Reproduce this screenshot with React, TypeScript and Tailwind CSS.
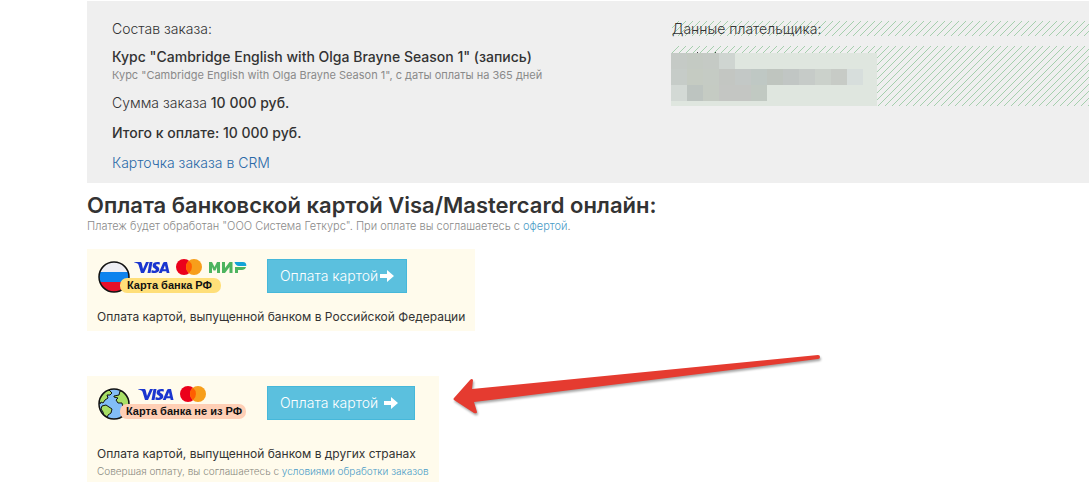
import type { ReactNode } from "react";

const STRIPES =
  "bg-[linear-gradient(135deg,transparent_43%,#a5cfad_46%,#a5cfad_54%,transparent_57%)] bg-[length:7px_7px]";

// 16px cells of the blurred payer data, row by row
const CELLS = [
  ["#c5cac6", "#c4cac3", "#c5cac5", "#cfd5d1"],
  ["#c6ccc8", "#c5cbc2", "#c5cbc4", "#c3c6c2", "#c3c8c6", "#bfc8c4", "#bfc5bf", "#c1c6c4", "#c6cbc8", "#cbd1cb", "#c7cbc6", "#d7dedc"],
  ["#d3d9d5", "#bdc4c0", "#c5cbc3", "#c4c6c3", "#c4c6c3", "#c1c9c2"],
];

function HiddenPayer() {
  return (
    <svg width="206" height="60" viewBox="0 0 206 60" className="-ml-px block" aria-hidden="true">
      <path d="M26 6h1v1h-1zM44 6h1v1h-1z" fill="#444" />
      <rect y="7" width="206" height="53" fill="#dfe6df" />
      {CELLS.map((row, y) =>
        row.map((color, x) => (
          <rect key={`${x}-${y}`} x={x * 16} y={7 + y * 16} width="16" height="16" fill={color} />
        ))
      )}
    </svg>
  );
}

function Visa() {
  return (
    <g fill="#1a35cf">
      <path d="M0 0h6c1 0 1.500.5 1.700 1.300L9 7l3-7h3L10 11H7L4.500 2.700C4 1.500 2 .7 0 .3z" />
      <path d="M15.500 0h3l-2 11h-3z" />
      <path d="M26 .4l-.5 2.300c-2-.8-3.500-.6-3.500.3 0 1.200 3.300 1.500 3.300 4.200 0 3.500-4.500 4.600-8 3.300l.5-2.400c2 1 4 .8 4-.3 0-1.200-3.200-1.500-3.200-4.200C18.600.2 22.700-.6 26 .4z" />
      <path fillRule="evenodd" d="M30.500 0H33l2.500 11h-2.800l-.4-1.700H28.500L27.700 11h-3L29 1c.3-.7.800-1 1.500-1zM31 3.300L29.400 7.200h2.400z" />
    </g>
  );
}

function Mastercard() {
  return (
    <>
      <circle cx="8" cy="8" r="8" fill="#eb001b" />
      <circle cx="18" cy="8" r="8" fill="#f79e1b" />
      <path d="M13 1.800a8 8 0 0 1 0 12.400a8 8 0 0 1 0-12.400z" fill="#ff5f00" />
    </>
  );
}

function RussianCards() {
  return (
    <svg width="150" height="34" viewBox="0 0 150 34" role="img" aria-label="Visa, Mastercard, Мир">
      <clipPath id="flag">
        <circle cx="17" cy="18" r="15" />
      </clipPath>
      <g clipPath="url(#flag)">
        <path d="M0 0h34v14H0z" fill="#eeeef3" />
        <path d="M0 13h34v10H0z" fill="#0d83ee" />
        <path d="M0 23h34v12H0z" fill="#e8102b" />
      </g>
      <circle cx="17" cy="18" r="15" fill="none" stroke="#111" strokeWidth="1.500" />
      <g transform="translate(37 3)"><Visa /></g>
      <g transform="translate(79 0)"><Mastercard /></g>
      <g transform="translate(112 3)">
        <path d="M0 11V0h3l2.500 5L8 0h3v11H8V5L6.500 8.500h-2L3 5v6zM13 11V0h3v6l4.500-6h3v11h-3V5L16 11zM26 5h11c-.6 2.200-2.300 3-4 3h-4v3h-3z" fill="#4db45f" />
        <path d="M25.500 0H34c2.300 0 3.500 1.500 3.300 4H30c-2.500 0-4-1.700-4.500-4z" fill="#13a3d7" />
      </g>
      <rect x="23" y="19" width="101" height="15" rx="7" fill="#ffdf79" />
      <text x="30" y="30" fontSize="11" fontWeight="700" fill="#111" className="font-['Liberation_Sans',sans-serif]">Карта банка РФ</text>
    </svg>
  );
}

function WorldCards() {
  return (
    <svg width="150" height="34" viewBox="0 0 150 34" role="img" aria-label="Visa, Mastercard">
      <clipPath id="globe">
        <circle cx="17" cy="18" r="15" />
      </clipPath>
      <circle cx="17" cy="18" r="15" fill="#82bdf7" />
      <g clipPath="url(#globe)" fill="#a8df66" stroke="#111" strokeWidth="1">
        <path d="M1 13L6 6l6-2 3 3-2 2-3 0 1 3-3 2-2 3-2-1-1 2z" />
        <path d="M5 20l4-1 6 4-1 4-3 2-1 4-3-2-1-5-2-3z" />
        <path d="M17 10l5-1 1-4 5 1 6 7v7l-4-1-1 4-3-1-1-5-4 0-2-3 2-2-4-1z" />
      </g>
      <circle cx="17" cy="18" r="15" fill="none" stroke="#111" strokeWidth="1.500" />
      <g transform="translate(41 3)"><Visa /></g>
      <g transform="translate(83 0)"><Mastercard /></g>
      <rect x="23" y="18" width="126" height="15" rx="7" fill="#ffcfb5" />
      <text x="29" y="29" fontSize="11" fontWeight="700" fill="#111" className="font-['Liberation_Sans',sans-serif]">Карта банка не из РФ</text>
    </svg>
  );
}

interface PayButtonProps {
  spacing: string;
}

function PayButton({ spacing }: PayButtonProps) {
  return (
    <button className={`flex h-[34px] items-center border border-[#46b8da] bg-[#5bc0de] text-sm text-white ${spacing}`}>
      Оплата картой
      <svg width="14" height="12" viewBox="0 0 14 12" aria-hidden="true">
        <path d="M0 4h7V0l7 6-7 6V8H0z" fill="currentColor" />
      </svg>
    </button>
  );
}

interface PayOptionProps {
  cards: ReactNode;
  button: ReactNode;
  children: ReactNode;
}

function PayOption({ cards, button, children }: PayOptionProps) {
  return (
    <section className="w-fit bg-[#fffbec] px-2.5 pt-2.5">
      <div className="flex items-start gap-5">
        {cards}
        {button}
      </div>
      {children}
    </section>
  );
}

export default function App() {
  return (
    <main className="pl-[87px] pt-px font-['Inter','Liberation_Sans',sans-serif] text-sm font-light text-[#333]">
      <section className="flex bg-[#efefef] pb-2.5 pl-[25px] pt-[18px]">
        <div className="w-[560px] shrink-0">
          <p className="leading-5">Состав заказа:</p>
          <p className="mt-2 font-medium leading-5">Курс "Cambridge English with Olga Brayne Season 1" (запись)</p>
          <p className="text-[11px] font-normal leading-4 text-[#8a8a8a]">Курс "Cambridge English with Olga Brayne Season 1", с даты оплаты на 365 дней</p>
          <p className="mt-2.5 leading-5">
            Сумма заказа <b className="font-medium">10 000 руб.</b>
          </p>
          <p className="mt-2.5 font-medium leading-5">Итого к оплате: 10 000 руб.</p>
          <p className="mt-2.5 leading-5">
            <a href="#crm" className="text-[#2a6aa8]">Карточка заказа в CRM</a>
          </p>
        </div>
        <div className="grow pt-0.5">
          <p className={`leading-[15px] ${STRIPES}`}>Данные плательщика:</p>
          <div className={`mt-2.5 ${STRIPES}`}>
            <HiddenPayer />
          </div>
        </div>
      </section>

      <h1 className="mt-2 text-[22px] font-semibold leading-7">Оплата банковской картой Visa/Mastercard онлайн:</h1>
      <p className="text-[11px] leading-[14px] text-[#8a8a8a]">
        Платеж будет обработан "ООО Система Геткурс". При оплате вы соглашаетесь с{" "}
        <a href="#offer" className="text-[#4a9bc7]">офертой</a>.
      </p>

      <div className="mt-4">
        <PayOption cards={<RussianCards />} button={<PayButton spacing="gap-0.5 px-3" />}>
          <p className="mt-3.5 pb-1 text-xs font-normal leading-5">Оплата картой, выпущенной банком в Российской Федерации</p>
        </PayOption>
      </div>

      <div className="relative mt-[45px]">
        <PayOption cards={<WorldCards />} button={<PayButton spacing="gap-1.5 pl-3 pr-4" />}>
          <p className="mt-6 text-xs font-normal leading-5">Оплата картой, выпущенной банком в других странах</p>
          <p className="pb-1 text-[10px] leading-[14px] text-[#8a8a80]">
            Совершая оплату, вы соглашаетесь с{" "}
            <a href="#terms" className="text-[#4a9bc7]">условиями обработки заказов</a>
          </p>
        </PayOption>
        <svg width="372" height="66" viewBox="0 0 372 66" className="absolute left-[363px] -top-[25px] drop-shadow-[1px_2px_1px_rgba(0,0,0,0.35)]" aria-hidden="true">
          <path d="M4 47L20 29q2-2 3 0l-1 9L368 4q2 0 2 2t-2 2L24 51l3 10q0 2-3 1L4 49q-1-1 0-2z" fill="#e53b30" />
        </svg>
      </div>
    </main>
  );
}
